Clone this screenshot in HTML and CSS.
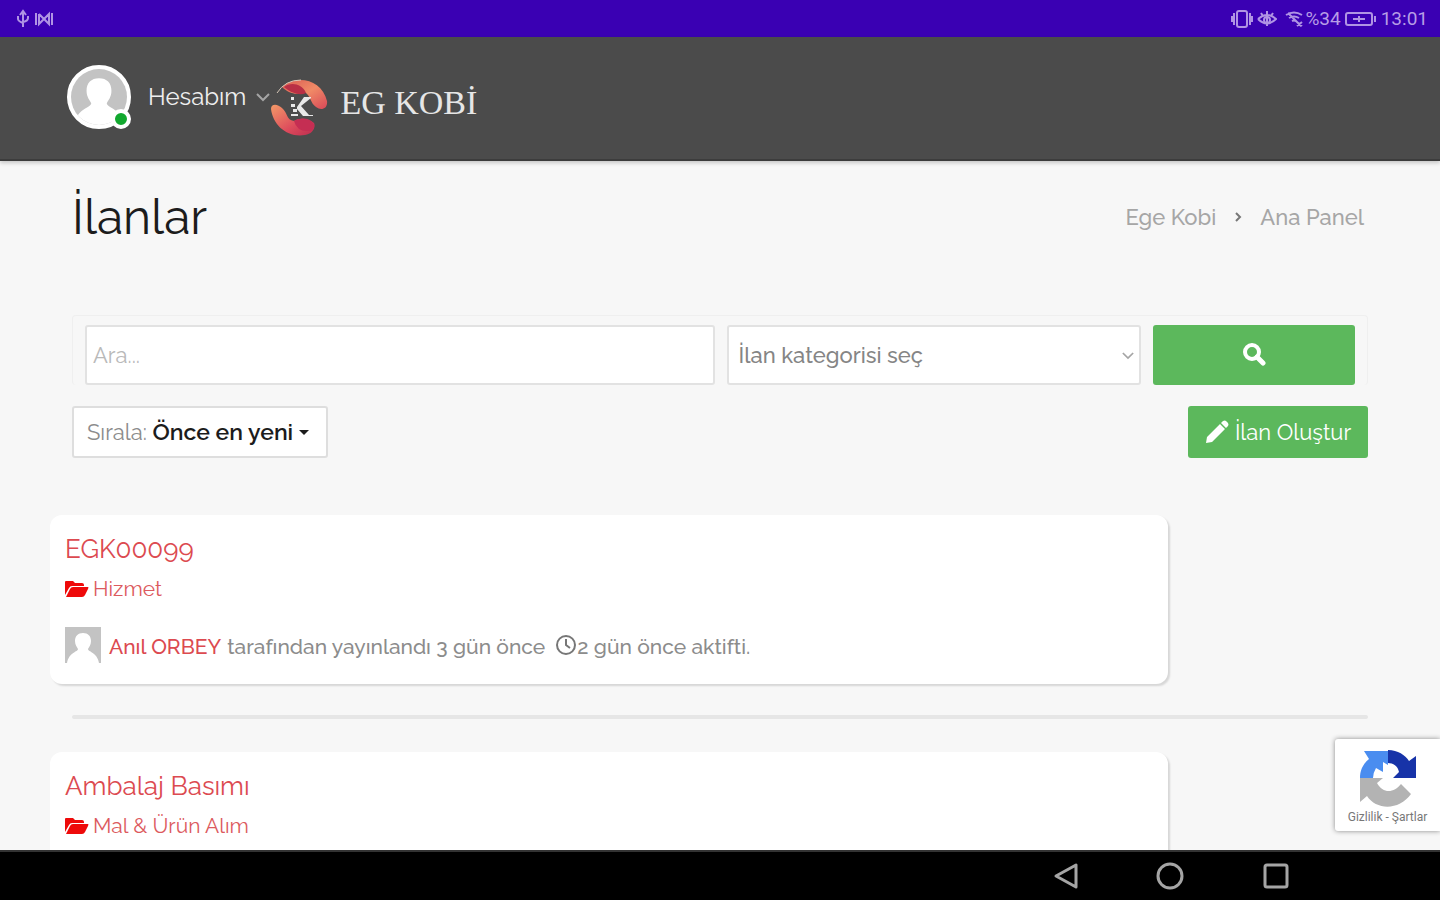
FILE: index.html
```html
<!DOCTYPE html>
<html lang="tr">
<head>
<meta charset="utf-8">
<meta name="viewport" content="width=device-width, initial-scale=1">
<title>İlanlar</title>
<link rel="stylesheet" href="styles.css">
</head>
<body>
<svg class="sprite" aria-hidden="true">
  <symbol id="folder" viewBox="0 0 24 18"><path d="M0 15V2Q0 1 1 1H8L10 3H17Q19 3 19 5V6H7Q5 6 4 8Z"/><path d="M1 17 5 9Q6 7 8 7H23Q24 7 23 9L20 15Q19 17 17 17Z"/></symbol>
  <symbol id="person" viewBox="0 0 36 36"><path fill="#c3c3c3" d="M0 0H36V36H0Z"/><path fill="#fff" d="M18 6C23 6 26 9 26 14C26 18 24 20 23 22C23 25 32 25 34 36H2C4 25 13 25 13 22C12 20 10 18 10 14C10 9 13 6 18 6Z"/></symbol>
</svg>

<div class="status">
  <div class="status-group">
    <svg width="14" height="20" viewBox="0 0 14 20" class="line"><path d="M7 18V3M4 6 7 2 10 6M2 7V10Q2 12 7 14M12 7V9Q12 12 7 13"/></svg>
    <svg width="20" height="16" viewBox="0 0 20 16" class="line"><path d="M2 2V14M5 3V13L10 8 15 13V3L10 8 5 3M18 2V14"/></svg>
  </div>
  <div class="status-group">
    <svg width="22" height="20" viewBox="0 0 22 20" class="line"><rect x="6" y="2" width="10" height="16" rx="2"/><path d="M3 4V16M19 4V16M1 7V13M21 7V13"/></svg>
    <svg width="20" height="18" viewBox="0 0 20 18" class="line"><path d="M1 9Q10 1 19 9Q10 18 1 9M10 1V16M4 3 6 6M16 3 14 6"/><circle cx="10" cy="10" r="3"/></svg>
    <svg class="line wifi" width="18" height="16" viewBox="0 0 18 16"><path d="M1 4Q9-1 17 4M4 7Q9 4 14 7M7 10Q9 9 11 10M3 2 16 15M12 11 17 15M17 11 12 15"/></svg>
    <span>%34</span>
    <svg width="32" height="16" viewBox="0 0 32 16" class="line"><rect x="1" y="2" width="26" height="12" rx="2"/><path d="M30 5V11M8 8H20M14 5V11"/></svg>
    <span>13:01</span>
  </div>
</div>

<header class="header">
  <button class="account" type="button">
    <span class="avatar"><svg viewBox="0 0 36 36"><use href="#person"/></svg><i class="online"></i></span>
    <span>Hesabım</span>
    <svg class="chevron" width="14" height="9" viewBox="0 0 14 9"><path d="M1 1 7 7 13 1"/></svg>
  </button>
  <a class="brand" href="#">
    <svg width="58" height="58" viewBox="0 0 58 58">
      <defs>
        <linearGradient id="top" x1="0" y1="0" x2="1" y2="1"><stop offset="0" stop-color="#d95a52"/><stop offset=".5" stop-color="#f08a66"/><stop offset="1" stop-color="#d84858"/></linearGradient>
        <linearGradient id="bottom" x1="0" y1="0" x2="1" y2="1"><stop offset="0" stop-color="#f39a68"/><stop offset=".6" stop-color="#dd4b5c"/><stop offset="1" stop-color="#bc2d4f"/></linearGradient>
      </defs>
      <path fill="url(#top)" d="M12 9C26-4 52 1 57 23C58 31 51 33 46 29C40 25 41 17 34 14C27 18 18 15 12 9Z"/>
      <path fill="#b92f45" d="M14 9C20 4 32 5 36 15C30 18 21 15 14 9Z"/>
      <path fill="none" stroke="#d8c8b8" d="M7 15Q15 2 31 2"/>
      <path fill="url(#bottom)" d="M1 31C1 25 8 26 12 30C18 35 16 42 24 43C31 39 39 41 44 45C46 50 42 56 35 57C17 60 3 47 1 31Z"/>
      <path fill="#c52e53" d="M24 43C31 39 40 40 44 46C45 49 43 53 39 53Q27 54 24 43Z"/>
      <path fill="#e8e8e8" d="M21 19H24V22H21ZM21 26H25V29H21ZM21 36H28V38H21ZM23 31H27V34H23ZM34 19H41V20L31 28 39 37H43V38H33L27 31V29Z"/>
    </svg>
    <span class="brand-name">EG KOBİ</span>
  </a>
</header>

<main class="main">
  <div class="title-row">
    <h1>İlanlar</h1>
    <nav class="crumbs" aria-label="Konum"><a href="#">Ege Kobi</a><svg width="8" height="12" viewBox="0 0 8 12"><path d="M2 2 6 6 2 10"/></svg><a href="#">Ana Panel</a></nav>
  </div>

  <form class="search">
    <input type="text" placeholder="Ara..." aria-label="Ara">
    <div class="select-wrap">
      <select aria-label="İlan kategorisi"><option>İlan kategorisi seç</option></select>
      <svg class="chevron" width="12" height="8" viewBox="0 0 14 9"><path d="M1 1 7 7 13 1"/></svg>
    </div>
    <button class="green" type="button" aria-label="Ara"><svg width="24" height="24" viewBox="0 0 24 24"><circle cx="10" cy="9" r="7" fill="none" stroke="#fff" stroke-width="4"/><path d="M15 14 21 20" stroke="#fff" stroke-width="5" stroke-linecap="round"/></svg></button>
  </form>

  <div class="actions">
    <button class="sort" type="button">Sırala: <b>Önce en yeni</b><i class="caret"></i></button>
    <button class="green create" type="button"><svg width="24" height="24" viewBox="0 0 24 24" fill="#fff"><path d="M1 23 2 17 15 4 20 9 7 22ZM16 3 18 1Q20 0 21 1L23 3Q24 5 23 6L21 8Z"/></svg>İlan Oluştur</button>
  </div>

  <section class="list">
    <article class="card">
      <h2><a href="#">EGK00099</a></h2>
      <a class="category" href="#"><svg width="24" height="18"><use href="#folder"/></svg>Hizmet</a>
      <p class="meta"><svg class="author" width="36" height="36"><use href="#person"/></svg><a href="#">Anıl ORBEY</a><span>tarafından yayınlandı 3 gün önce</span><svg class="clock-icon" width="22" height="22" viewBox="0 0 22 22"><circle cx="11" cy="11" r="9"/><path d="M11 5V11L15 14"/></svg><span>2 gün önce aktifti.</span></p>
    </article>
    <hr>
    <article class="card">
      <h2><a href="#">Ambalaj Basımı</a></h2>
      <a class="category" href="#"><svg width="24" height="18"><use href="#folder"/></svg>Mal &amp; Ürün Alım</a>
    </article>
  </section>

  <aside class="captcha">
    <svg width="58" height="58" viewBox="0 0 58 58">
      <path fill="#4a8df0" d="M1 29C1 20 5 14 10 10L5 2H29V16L24 13V23L17 19Q14 24 14 29Z"/>
      <path fill="#1733a8" d="M29 1C39 1 46 6 50 12L57 7V29H34L40 23C39 17 34 14 29 14Z"/>
      <path fill="#b3b3b3" d="M1 29H24L18 34C24 45 35 44 42 35L52 45C40 62 17 61 8 47L1 53Z"/>
    </svg>
    <small>Gizlilik - Şartlar</small>
  </aside>
</main>

<footer class="navbar">
  <button type="button" aria-label="Geri"><svg width="28" height="28" viewBox="0 0 28 28"><path d="M25 3V25L5 14Z"/></svg></button>
  <button type="button" aria-label="Ana ekran"><svg width="28" height="28" viewBox="0 0 28 28"><circle cx="14" cy="14" r="12"/></svg></button>
  <button type="button" aria-label="Son uygulamalar"><svg width="28" height="28" viewBox="0 0 28 28"><rect x="4" y="3" width="22" height="22" rx="2"/></svg></button>
</footer>
</body>
</html>
```
FILE: styles.css
```css
* { box-sizing: border-box; }
body {
  margin: 0;
  height: 100vh;
  display: flex;
  flex-direction: column;
  overflow: hidden;
  background: #f7f7f7;
  color: #8c8c8c;
  font: 22px/32px Raleway, Lato, sans-serif;
}
button, input, select { font: inherit; }
button { cursor: pointer; }
a { color: inherit; text-decoration: none; }
.sprite { position: absolute; width: 0; height: 0; }

.status {
  flex: none;
  display: flex;
  justify-content: space-between;
  padding: 0 12px 0 16px;
  height: 37px;
  background: #3a00b3;
  color: #b79de6;
  font: 19px/37px Roboto, sans-serif;
}
.status-group { display: flex; align-items: center; gap: 4px; }
.line { fill: none; stroke: #b094e4; stroke-width: 2; }
.wifi { margin-left: 4px; margin-right: -2px; }

.header {
  flex: none;
  display: flex;
  align-items: flex-start;
  height: 124px;
  padding: 28px 5% 0 67px;
  background: #4b4b4b;
  border-bottom: 2px solid #3c3c3c;
  box-shadow: 0 2px 4px #0003;
}
.account {
  display: flex;
  align-items: center;
  padding: 0;
  border: 0;
  background: none;
  color: #efefef;
  font-size: 24px;
}
.avatar { position: relative; display: block; width: 64px; height: 64px; margin-right: 17px; }
.avatar svg { display: block; width: 64px; height: 64px; border: 4px solid #fff; border-radius: 50%; background: #fff; }
.online { position: absolute; right: 0; bottom: 0; width: 20px; height: 20px; border: 4px solid #fff; border-radius: 50%; background: #12a82f; }
.chevron { fill: none; stroke: #a5a5a5; stroke-width: 2; }
.account .chevron { margin-left: 10px; }
.brand { display: flex; align-items: center; gap: 12px; margin-top: 13px; }
.brand-name { padding-bottom: 8px; color: #e6e6e6; font: 34px/40px "Liberation Serif", serif; }

.main { position: relative; flex: 1; min-height: 0; overflow: hidden; padding: 24px 5% 0; }
.title-row { display: flex; align-items: center; justify-content: space-between; height: 64px; padding: 0 4px 0 0; }
h1 { margin: 0; color: #1c1c1c; font-size: 48px; line-height: 64px; font-weight: 400; }
.crumbs { display: flex; align-items: center; gap: 18px; color: #a6a6a6; font-weight: 500; }
.crumbs svg { fill: none; stroke: #777; stroke-width: 2; }

.search {
  display: grid;
  grid-template-columns: 629fr 414fr 202fr;
  gap: 12px;
  margin-top: 66px;
  padding: 9px 12px 0;
  border: 1px solid #efefef;
  border-bottom: 0;
  border-radius: 4px;
}
.search input, .search select {
  width: 100%;
  height: 60px;
  border: 2px solid #e2e2e2;
  border-radius: 3px;
  background: #fff;
  color: #858585;
}
.search input { padding: 0 6px; }
.search input::placeholder { color: #b9b9b9; }
.select-wrap { position: relative; }
.search select { padding: 0 10px; font-weight: 500; appearance: none; }
.select-wrap .chevron { position: absolute; right: 7px; top: 27px; }
.green { display: flex; align-items: center; justify-content: center; border: 0; border-radius: 3px; background: #5cb85c; color: #fff; }

.actions { display: flex; justify-content: space-between; height: 52px; margin-top: 21px; }
.sort { display: flex; align-items: center; width: 256px; padding: 0 13px; border: 2px solid #dedede; border-radius: 3px; background: #fff; color: #8c8c8c; white-space: pre; }
.sort b { color: #1c1c1c; font-size: 23px; font-weight: 600; }
.caret { margin-left: 6px; border: 5px solid transparent; border-top-color: #1c1c1c; border-bottom: 0; }
.create { width: 180px; gap: 6px; }

.list { margin-top: 57px; }
.card {
  height: 169px;
  margin-left: -22px;
  margin-right: 200px;
  padding-left: 15px;
  border-radius: 12px;
  background: #fff;
  box-shadow: 2px 2px 2px #0002;
}
h2 { margin: 0; padding-top: 18px; font-size: 26px; line-height: 32px; font-weight: 400; color: #dc4a50; }
.category { display: flex; align-items: center; gap: 4px; margin-top: 8px; color: #dc5a5e; font-size: 21px; }
.category svg { fill: #ee0a0a; }
.meta { display: flex; align-items: center; height: 36px; margin: 22px 0 0; font-size: 21px; line-height: 36px; white-space: nowrap; }
.meta a { margin: 0 6px 0 8px; color: #dc4a50; }
.meta a, .meta span { padding-top: 3px; font-weight: 500; }
.clock-icon { margin-left: 10px; fill: none; stroke: #777; stroke-width: 2; }
hr { height: 4px; margin: 31px 0 33px; border: 0; border-radius: 2px; background: #e6e6e6; }

.captcha {
  position: absolute;
  right: 0;
  bottom: 19px;
  width: 105px;
  height: 92px;
  padding-top: 10px;
  border-radius: 3px 0 0 3px;
  background: #fff;
  box-shadow: 0 0 5px #888;
  text-align: center;
}
.captcha svg { display: block; margin: 0 auto; }
.captcha small { display: block; font: 12px/20px Roboto, sans-serif; color: #777; white-space: nowrap; }

.navbar { flex: none; display: flex; justify-content: flex-end; gap: 77px; height: 50px; padding-right: 151px; border-top: 2px solid #333; background: #000; }
.navbar button { display: flex; align-items: center; padding: 0; border: 0; background: none; }
.navbar svg { fill: none; stroke: #a5a5a5; stroke-width: 3; stroke-linejoin: round; }
```
